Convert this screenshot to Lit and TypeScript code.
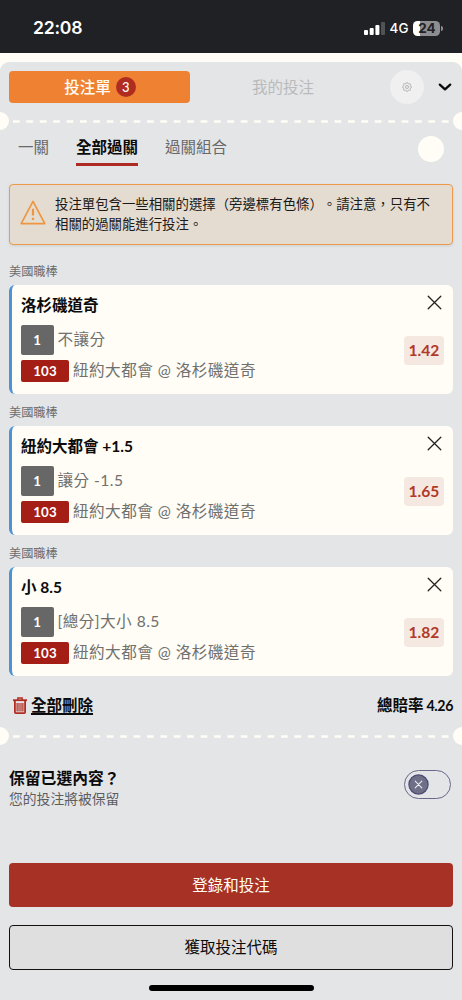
import { LitElement, html, css } from "lit";
import { customElement, property } from "lit/decorators.js";

interface Bet {
  league: string;
  title: string;
  market: string;
  odds: string;
}

const BETS: Bet[] = [
  { league: "美國職棒", title: "洛杉磯道奇", market: "不讓分", odds: "1.42" },
  { league: "美國職棒", title: "紐約大都會 +1.5", market: "讓分 -1.5", odds: "1.65" },
  { league: "美國職棒", title: "小 8.5", market: "[總分]大小 8.5", odds: "1.82" },
];

const gearPath = (() => {
  const pts: string[] = [];
  for (let i = 0; i < 64; i++) {
    const a = (i / 64) * Math.PI * 2;
    const r = 4 + 0.6 * Math.cos(a * 8);
    pts.push(`${(5 + r * Math.cos(a)).toFixed(2)} ${(5 + r * Math.sin(a)).toFixed(2)}`);
  }
  return `M${pts.join("L")}Z`;
})();

@customElement("status-bar")
class StatusBar extends LitElement {
  static styles = css`
    :host {
      display: flex;
      align-items: center;
      justify-content: space-between;
      box-sizing: border-box;
      height: 53px;
      padding: 3px 19px 0 33px;
      background: #202124;
      color: #fff;
      font-family: Inter, sans-serif;
    }
    .time {
      font-size: 17.6px;
      line-height: 22px;
      font-weight: 600;
      letter-spacing: -0.25px;
    }
    .right {
      display: flex;
      align-items: center;
    }
    .net {
      margin: 0 5px 0 5px;
      font-size: 13.4px;
      font-weight: 500;
    }
    .battery {
      width: 27px;
      height: 15px;
      border-radius: 4.5px;
      background: linear-gradient(90deg, #fff 7px, #8e8e92 7px);
      color: #202124;
      font-size: 13.5px;
      line-height: 15px;
      font-weight: 700;
      text-align: center;
    }
    .cap {
      width: 1.6px;
      height: 5px;
      margin-left: 1px;
      border-radius: 0 2px 2px 0;
      background: #8e8e92;
    }
  `;
  render() {
    return html`
      <span class="time">22:08</span>
      <div class="right">
        <svg width="21" height="13" viewBox="0 0 21 13" fill="#fff">
          <rect x="0" y="8" width="4" height="5" rx="1" />
          <rect x="5.7" y="6" width="4" height="7" rx="1" />
          <rect x="11.4" y="3" width="4" height="10" rx="1" />
          <rect x="17" y="0" width="4" height="13" rx="1" fill="#515255" />
        </svg>
        <span class="net">4G</span>
        <span class="battery">24</span><span class="cap"></span>
      </div>
    `;
  }
}

@customElement("ticket-divider")
class TicketDivider extends LitElement {
  static styles = css`
    :host {
      display: flex;
      align-items: center;
      justify-content: space-between;
      height: 18px;
      overflow: hidden;
    }
    .notch {
      width: 18px;
      height: 18px;
      flex: none;
      border-radius: 50%;
      background: #fffdf5;
    }
    .left {
      margin-left: -9px;
    }
    .right {
      margin-right: -9px;
    }
    svg {
      display: block;
      flex: none;
      margin-top: 1px;
    }
  `;
  render() {
    return html`
      <span class="notch left"></span>
      <svg width="436" height="3" viewBox="0 0 436 3">
        <line x1="0" y1="1.5" x2="436" y2="1.5" stroke="#fffdf5" stroke-width="2.6" stroke-dasharray="6.7 6.7" />
      </svg>
      <span class="notch right"></span>
    `;
  }
}

@customElement("bet-card")
class BetCard extends LitElement {
  @property({ attribute: false }) bet!: Bet;

  static styles = css`
    :host {
      display: block;
      height: 141.1px;
    }
    .league {
      height: 26.6px;
      font-size: 12.2px;
      line-height: 27px;
      color: #6b6b6c;
    }
    .card {
      display: flex;
      justify-content: space-between;
      box-sizing: border-box;
      height: 109.7px;
      padding: 9px 9px 0 9px;
      border-left: 3.5px solid #4b93d4;
      border-radius: 6px;
      background: #fffdf5;
    }
    .title {
      height: 22px;
      margin-bottom: 9px;
      font-size: 15.5px;
      line-height: 22px;
      font-weight: 700;
      color: #0b0b0b;
      white-space: nowrap;
    }
    .row {
      display: flex;
      align-items: center;
      font-size: 15.6px;
      letter-spacing: 0.46px;
      color: #70706e;
      white-space: nowrap;
    }
    .text {
      padding-bottom: 3px;
    }
    .tag {
      flex: none;
      border-radius: 2px;
      color: #fff;
      font-size: 13.3px;
      font-weight: 700;
      letter-spacing: 0.1px;
      text-align: center;
    }
    .count {
      width: 32.5px;
      height: 30px;
      margin-right: 4px;
      line-height: 31px;
      background: #676767;
    }
    .code {
      width: 48px;
      height: 22px;
      margin-right: 4px;
      line-height: 23px;
      background: #a51e15;
    }
    .match {
      margin-top: 5px;
      height: 22px;
    }
    .side {
      display: flex;
      flex-direction: column;
      align-items: flex-end;
    }
    .close {
      display: block;
      margin: 1.4px 2px 26px 0;
    }
    .odds {
      width: 40px;
      height: 29px;
      border-radius: 4px;
      background: #f5e8e0;
      color: #b03a2a;
      font-size: 15.6px;
      line-height: 29px;
      font-weight: 700;
      text-align: center;
    }
  `;
  render() {
    const b = this.bet;
    return html`
      <div class="league">${b.league}</div>
      <div class="card">
        <div>
          <div class="title">${b.title}</div>
          <div class="row"><span class="tag count">1</span><span class="text">${b.market}</span></div>
          <div class="row match"><span class="tag code">103</span><span class="text">紐約大都會 @ 洛杉磯道奇</span></div>
        </div>
        <div class="side">
          <svg class="close" width="15" height="15" viewBox="0 0 15 15" stroke="#222" stroke-width="1.3" stroke-linecap="round">
            <path d="M1.2 1.2 13.8 13.8M13.8 1.2 1.2 13.8" />
          </svg>
          <span class="odds">${b.odds}</span>
        </div>
      </div>
    `;
  }
}

@customElement("app-root")
class AppRoot extends LitElement {
  static styles = css`
    :host {
      display: flex;
      flex-direction: column;
      width: 462px;
      height: 1000px;
      overflow: hidden;
      background: #fffdf5;
      font-family: Lato, "Noto Sans CJK TC", sans-serif;
      color: #0b0b0b;
      text-spacing-trim: space-all;
    }
    .panel {
      flex: 1;
      margin-top: 9px;
      border-radius: 9px 9px 0 0;
      background: #e4e5e7;
    }
    .head {
      display: flex;
      align-items: center;
      height: 49.5px;
      padding: 0 9px;
    }
    .slip {
      display: flex;
      align-items: center;
      justify-content: center;
      gap: 5px;
      width: 181px;
      height: 32px;
      border-radius: 4px;
      background: #ef8132;
      color: #fffdf5;
      font-size: 15.5px;
      font-weight: 500;
    }
    .slip-text {
      padding: 0 0 2px 1px;
    }
    .num {
      width: 20px;
      height: 20px;
      border-radius: 50%;
      background: #b12c20;
      font-size: 13px;
      line-height: 20px;
      text-align: center;
    }
    .mine {
      width: 186px;
      padding-bottom: 2px;
      color: #b9babc;
      font-size: 15.5px;
      text-align: center;
    }
    .gear {
      display: flex;
      align-items: center;
      justify-content: center;
      width: 34px;
      height: 34px;
      margin: 0 14px 0 14px;
      border-radius: 50%;
      background: #f0f0f0;
    }
    .tabs {
      display: flex;
      align-items: flex-start;
      height: 54.5px;
      padding: 0 18px;
      font-size: 15.5px;
      line-height: 22px;
      color: #68696b;
    }
    .tab {
      margin-top: 6.5px;
    }
    .tab + .tab {
      margin-left: 27px;
    }
    .active {
      padding-bottom: 5px;
      border-bottom: 3px solid #ad2b22;
      color: #0b0b0b;
      font-weight: 700;
    }
    .dot {
      width: 26px;
      height: 26px;
      margin: 6.5px 0 0 auto;
      border-radius: 50%;
      background: #fffdf5;
    }
    .alert {
      display: flex;
      align-items: center;
      box-sizing: border-box;
      height: 60.5px;
      margin: 0 9px 0.5px;
      padding: 0 9px 1.5px 9px;
      border: 1.4px solid #ec9a4c;
      border-radius: 4px;
      background: #e5dcd1;
      box-shadow: 0 1px 3px #00000018;
      color: #1c1a18;
      font-size: 13.4px;
      line-height: 20px;
    }
    .alert svg {
      flex: none;
      margin: -3px 8px 0 0;
    }
    .bets {
      padding: 13px 9px 0;
    }
    .summary {
      display: flex;
      align-items: center;
      box-sizing: border-box;
      height: 46.5px;
      margin-top: -1px;
      padding: 0 9px 0 13px;
      font-size: 15.5px;
      font-weight: 700;
    }
    .trash {
      margin-top: 3px;
    }
    .clear {
      margin-left: 4px;
      text-decoration: underline;
      text-decoration-thickness: 1.5px;
      text-underline-offset: 2px;
    }
    .total {
      display: flex;
      align-items: baseline;
      gap: 3px;
      margin-left: auto;
    }
    .sum {
      font-size: 14.2px;
      letter-spacing: -0.4px;
    }
    .keep {
      display: flex;
      align-items: flex-start;
      justify-content: space-between;
      height: 44px;
      margin-top: 20.5px;
      padding: 0 11px 0 9px;
    }
    .keep-text {
      padding-top: 2px;
    }
    .keep-title {
      font-size: 15.8px;
      line-height: 22px;
      font-weight: 700;
    }
    .keep-sub {
      font-size: 13.8px;
      line-height: 20px;
      color: #5c5d5f;
    }
    .toggle {
      display: flex;
      align-items: center;
      box-sizing: border-box;
      width: 47px;
      height: 29px;
      margin-top: 5px;
      padding-left: 3px;
      border: 1.2px solid #69688a;
      border-radius: 15px;
    }
    .actions {
      display: grid;
      gap: 18px;
      padding: 53.6px 9px 0;
    }
    .btn {
      box-sizing: border-box;
      height: 44.6px;
      border-radius: 4px;
      font-size: 15.5px;
      text-align: center;
    }
    .primary {
      background: #a63124;
      color: #fffdf5;
      line-height: 44px;
    }
    .outline {
      border: 1.4px solid #111;
      background: #dfdfdf;
      line-height: 42px;
    }
    .home {
      width: 165px;
      height: 6px;
      margin: 15px auto 0;
      border-radius: 3px;
      background: #000;
    }
  `;
  render() {
    return html`
      <status-bar></status-bar>
      <main class="panel">
        <div class="head">
          <div class="slip"><span class="slip-text">投注單</span><span class="num">3</span></div>
          <div class="mine">我的投注</div>
          <div class="gear">
            <svg width="10" height="10" viewBox="0 0 10 10" fill="none" stroke="#a3a3a3" stroke-width="0.8">
              <path d=${gearPath} />
              <circle cx="5" cy="5" r="1.5" />
            </svg>
          </div>
          <svg width="14" height="9" viewBox="0 0 14 9" fill="none" stroke="#0a0a0a" stroke-width="2.3" stroke-linecap="round" stroke-linejoin="round">
            <path d="M1.8 2.6 7 7.4 12.2 2.6" />
          </svg>
        </div>
        <ticket-divider></ticket-divider>
        <div class="tabs">
          <span class="tab">一關</span>
          <span class="tab active">全部過關</span>
          <span class="tab">過關組合</span>
          <span class="dot"></span>
        </div>
        <div class="alert">
          <svg width="28" height="26" viewBox="0 0 28 26" fill="none" stroke="#ee963f">
            <path d="M14 2.4 25.8 24.6H2.2Z" stroke-width="1.7" stroke-linejoin="round" />
            <path d="M14 9.8V16.6M14 18.8V21" stroke-width="2.2" />
          </svg>
          <div>投注單包含一些相關的選擇（旁邊標有色條）。請注意，只有不相關的過關能進行投注。</div>
        </div>
        <div class="bets">${BETS.map((b) => html`<bet-card .bet=${b}></bet-card>`)}</div>
        <div class="summary">
          <svg class="trash" width="14" height="17" viewBox="0 0 14 17" fill="none" stroke="#b12c20">
            <path d="M0 3.2H14" stroke-width="1.8" />
            <path d="M4.8 3V1H9.2V3" stroke-width="1.3" />
            <path d="M1.9 4V15.2Q1.9 16.1 2.8 16.1H11.2Q12.1 16.1 12.1 15.2V4" stroke-width="1.8" />
            <path d="M4.1 6V14.4M6 6V14.4M8 6V14.4M9.9 6V14.4" stroke-width="1.2" />
          </svg>
          <span class="clear">全部刪除</span>
          <span class="total"><span>總賠率</span><span class="sum">4.26</span></span>
        </div>
        <ticket-divider></ticket-divider>
        <div class="keep">
          <div class="keep-text">
            <div class="keep-title">保留已選內容？</div>
            <div class="keep-sub">您的投注將被保留</div>
          </div>
          <div class="toggle">
            <svg width="21" height="21" viewBox="0 0 21 21" stroke-linecap="round">
              <circle cx="10.5" cy="10.5" r="9.6" fill="#6f6f88" stroke="#4b4874" stroke-width="1.2" />
              <path d="M7.2 7.2 13.8 13.8M13.8 7.2 7.2 13.8" stroke="#eeeef2" stroke-width="1.1" />
            </svg>
          </div>
        </div>
        <div class="actions">
          <div class="btn primary">登錄和投注</div>
          <div class="btn outline">獲取投注代碼</div>
        </div>
        <div class="home"></div>
      </main>
    `;
  }
}
